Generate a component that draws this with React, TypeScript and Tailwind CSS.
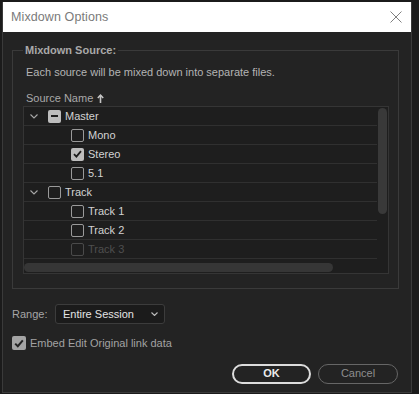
import React from 'react';

type BoxState = 'checked' | 'unchecked' | 'indeterminate';

interface TreeRow {
  level: 0 | 1;
  label: string;
  state: BoxState;
  dim?: boolean;
}

// last row is cut off by the horizontal scrollbar, only its box top shows
const rows: TreeRow[] = [
  { level: 0, label: 'Master', state: 'indeterminate' },
  { level: 1, label: 'Mono', state: 'unchecked' },
  { level: 1, label: 'Stereo', state: 'checked' },
  { level: 1, label: '5.1', state: 'unchecked' },
  { level: 0, label: 'Track', state: 'unchecked' },
  { level: 1, label: 'Track 1', state: 'unchecked' },
  { level: 1, label: 'Track 2', state: 'unchecked' },
  { level: 1, label: 'Track 3', state: 'unchecked', dim: true },
  { level: 1, label: '', state: 'unchecked', dim: true },
];

function CheckBox({ state, dim }: { state: BoxState; dim?: boolean }) {
  if (state === 'checked') {
    return (
      <div className="w-[13px] h-[13px] rounded-[2px] bg-[#bdbdbd] flex items-center justify-center shrink-0">
        <svg width="9" height="8" viewBox="0 0 9 8">
          <polyline points="1,4.2 3.4,6.6 8,1.2" fill="none" stroke="#1e1e1e" strokeWidth="1.8" />
        </svg>
      </div>
    );
  }
  if (state === 'indeterminate') {
    return (
      <div className="w-[13px] h-[13px] rounded-[2px] bg-[#bdbdbd] flex items-center justify-center shrink-0">
        <div className="w-[7px] h-[2px] bg-[#1e1e1e]" />
      </div>
    );
  }
  return (
    <div
      className={
        dim
          ? 'w-[13px] h-[13px] rounded-[2px] border-[1.5px] border-[#4a4a4a] shrink-0'
          : 'w-[13px] h-[13px] rounded-[2px] border-[1.5px] border-[#9a9a9a] shrink-0'
      }
    />
  );
}

function Chevron() {
  return (
    <svg width="8" height="5" viewBox="0 0 8 5" className="shrink-0">
      <polyline points="0.5,0.5 4,4 7.5,0.5" fill="none" stroke="#a8a8a8" strokeWidth="1.1" />
    </svg>
  );
}

export default function App() {
  return (
    <div className="w-[419px] h-[394px] bg-[#1b1b1b] pt-[2px] pl-[2px] overflow-hidden font-['Liberation_Sans',Arial,sans-serif]">
      <div className="w-[410px] h-[391px] flex flex-col bg-[#232323] border-x border-b border-[#3a3a3a]">
        {/* title bar */}
        <div className="h-[30px] bg-white flex items-center justify-between pl-[8px] pr-[9px] shrink-0">
          <span className="text-[12.5px] text-[#7a7a7a] tracking-[0.1px]">Mixdown Options</span>
          <svg width="12" height="12" viewBox="0 0 12 12">
            <line x1="0.5" y1="0.5" x2="11.5" y2="11.5" stroke="#808080" strokeWidth="1" />
            <line x1="11.5" y1="0.5" x2="0.5" y2="11.5" stroke="#808080" strokeWidth="1" />
          </svg>
        </div>

        <div className="flex flex-col pt-[10px]">
          {/* source group */}
          <fieldset className="ml-[9px] w-[387px] border border-[#3a3a3a] pl-[10px] pr-[9px] pb-[14px]">
            <legend className="px-[2px] text-[11px] leading-[16px] font-bold text-[#a9a9a9]">Mixdown Source:</legend>
            <div className="ml-[3px] mt-[7px] text-[11px] leading-[14px] text-[#b4b4b4]">
              Each source will be mixed down into separate files.
            </div>
            <div className="ml-[3px] mt-[12px] h-[14px] flex items-center gap-[4px] text-[11px] text-[#a9a9a9]">
              <span>Source Name</span>
              <svg width="7" height="9" viewBox="0 0 7 9">
                <line x1="3.5" y1="1.5" x2="3.5" y2="9" stroke="#c4c4c4" strokeWidth="1.6" />
                <polyline points="0.8,4 3.5,1.2 6.2,4" fill="none" stroke="#c4c4c4" strokeWidth="1.6" />
              </svg>
            </div>

            {/* tree list */}
            <div className="mt-[1px] w-[366px] h-[168px] border border-[#353535] bg-[#1e1e1e] flex flex-col">
              <div className="flex flex-1 min-h-0">
                <div className="flex-1 overflow-hidden">
                  {rows.map((row, i) => (
                    <div
                      key={i}
                      className={
                        row.level === 0
                          ? 'h-[19px] flex items-center pl-[6px] border-b border-[#303030]'
                          : 'h-[19px] flex items-center pl-[47px] border-b border-[#303030]'
                      }
                    >
                      {row.level === 0 && <Chevron />}
                      <div className={row.level === 0 ? 'ml-[10px]' : ''}>
                        <CheckBox state={row.state} dim={row.dim} />
                      </div>
                      {row.label && (
                        <span
                          className={
                            row.dim
                              ? 'ml-[4px] text-[11px] text-[#4e4e4e]'
                              : 'ml-[4px] text-[11px] text-[#d2d2d2]'
                          }
                        >
                          {row.label}
                        </span>
                      )}
                    </div>
                  ))}
                </div>
                <div className="w-[11px] pt-[1px] pl-[1px] pr-[1px]">
                  <div className="h-[106px] rounded-full bg-[#393939]" />
                </div>
              </div>
              <div className="h-[11px] pt-[1px] pb-[1px] flex">
                <div className="w-[309px] rounded-full bg-[#363636]" />
              </div>
            </div>
          </fieldset>

          {/* range */}
          <div className="mt-[15px] ml-[9px] flex items-center">
            <span className="text-[11px] text-[#a6a6a6] w-[43px]">Range:</span>
            <div className="w-[110px] h-[20px] bg-[#1b1b1b] border border-[#3c3c3c] rounded-[3px] flex items-center justify-between pl-[7px] pr-[6px]">
              <span className="text-[11px] text-[#e4e4e4]">Entire Session</span>
              <svg width="7" height="4" viewBox="0 0 7 4">
                <polyline points="0.5,0.5 3.5,3.5 6.5,0.5" fill="none" stroke="#bdbdbd" strokeWidth="1.1" />
              </svg>
            </div>
          </div>

          {/* embed */}
          <div className="mt-[11px] ml-[9px] flex items-center">
            <div className="w-[14px] h-[14px] rounded-[2px] bg-[#a4a4a4] flex items-center justify-center">
              <svg width="10" height="9" viewBox="0 0 10 9">
                <polyline points="1.2,4.6 3.8,7.2 8.8,1.4" fill="none" stroke="#232323" strokeWidth="2" />
              </svg>
            </div>
            <span className="ml-[4px] text-[11px] text-[#a2a2a2]">Embed Edit Original link data</span>
          </div>

          {/* buttons */}
          <div className="mt-[12px] flex justify-end gap-[7px] pr-[13px]">
            <div className="w-[79px] h-[20px] rounded-full border-2 border-[#dcdcdc] flex items-center justify-center text-[11px] font-bold text-[#ececec]">
              OK
            </div>
            <div className="w-[80px] h-[20px] rounded-full border-[1.5px] border-[#666666] flex items-center justify-center text-[11px] text-[#8e8e8e]">
              Cancel
            </div>
          </div>
        </div>
      </div>
    </div>
  );
}
